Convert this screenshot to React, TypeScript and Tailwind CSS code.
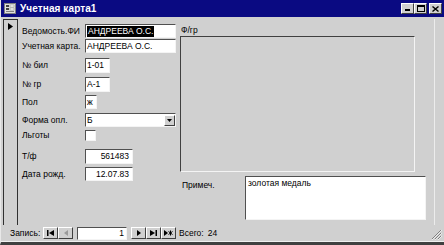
const raised = "border border-t-white border-l-white border-r-[#404040] border-b-[#404040]";
const sunken = "border border-t-[#505050] border-l-[#505050] border-r-[#f4f4f4] border-b-[#f4f4f4]";

function Field({
  label,
  mt,
  h,
  w,
  children,
}: {
  label: string;
  mt: string;
  h: string;
  w?: string;
  children: React.ReactNode;
}) {
  return (
    <div className={`flex items-center ${mt} ${h}`}>
      <div className="w-[63px] shrink-0 text-[8.5px] text-black">{label}</div>
      <div className={`${h} ${w ?? ""} flex`}>{children}</div>
    </div>
  );
}

function TextBox({ value, right, w }: { value: string; right?: boolean; w: string }) {
  return (
    <div
      className={`${w} h-full bg-white ${sunken} flex items-center px-[1px] text-[8.5px] text-black leading-none ${
        right ? "justify-end pr-[3px]" : ""
      }`}
    >
      {value}
    </div>
  );
}

function NavButton({ children }: { children: React.ReactNode }) {
  return (
    <div className={`w-[15px] h-[12px] ${raised} bg-[#d0d0d0] flex items-center justify-center`}>
      {children}
    </div>
  );
}

export default function App() {
  return (
    <div className="w-[444px] h-[245px] bg-[#d0d0d0] flex flex-col overflow-hidden font-['Liberation_Sans',Arial,sans-serif] border-l border-l-[#e8e8e8] border-b-[3px] border-b-[#404040]">
      {/* title bar */}
      <div className="h-[17px] shrink-0 bg-[#0a0a82] flex items-center pl-[3px] pr-[2px]">
        <svg width="12" height="11" viewBox="0 0 12 11">
          <rect x="0.5" y="0.5" width="11" height="10" fill="#e0e0e0" stroke="#808080" />
          <rect x="2" y="2" width="3" height="2" fill="#404040" />
          <rect x="6" y="2" width="4" height="2" fill="#ffffff" stroke="#808080" strokeWidth="0.5" />
          <rect x="2" y="5" width="3" height="2" fill="#404040" />
          <rect x="6" y="5" width="4" height="2" fill="#ffffff" stroke="#808080" strokeWidth="0.5" />
          <rect x="2" y="8" width="8" height="1" fill="#808080" />
        </svg>
        <span className="ml-[4px] text-[10px] font-bold text-white tracking-[0.1px]">Учетная карта1</span>
        <div className="ml-auto flex items-center">
          <div className={`w-[13px] h-[11px] ${raised} bg-[#d0d0d0] flex items-end justify-center pb-[2px]`}>
            <div className="w-[5px] h-[2px] bg-black" />
          </div>
          <div className={`w-[13px] h-[11px] ${raised} bg-[#d0d0d0] flex items-center justify-center`}>
            <div className="w-[8px] h-[7px] border border-black border-t-2" />
          </div>
          <div className={`ml-[2px] w-[13px] h-[11px] ${raised} bg-[#d0d0d0] flex items-center justify-center`}>
            <svg width="7" height="6" viewBox="0 0 7 6">
              <path d="M0.5 0.5L6.5 5.5M6.5 0.5L0.5 5.5" stroke="black" strokeWidth="1.4" />
            </svg>
          </div>
        </div>
      </div>

      {/* main area */}
      <div className="mt-[2px] h-[206px] flex">
        {/* record selector */}
        <div className="ml-[2px] w-[15px] h-full border-l border-r border-t border-[#303030] flex justify-center pt-[3px]">
          <svg width="5" height="7" viewBox="0 0 5 7">
            <path d="M0 0L5 3.5L0 7Z" fill="black" />
          </svg>
        </div>

        <div className="flex-1 flex border-r border-r-[#ececec] mr-[9px]">
          {/* left column */}
          <div className="w-[162px] shrink-0 pl-[4px] pt-[5px] flex flex-col">
            <Field label="Ведомость.ФИ" mt="mt-0" h="h-[14px]">
              <div className={`w-[91px] h-full bg-white ${sunken} flex items-center px-[1px]`}>
                <span className="bg-black text-white text-[8.5px] leading-[11px] px-[1px]">АНДРЕЕВА О.С.</span>
              </div>
            </Field>
            <Field label="Учетная карта." mt="mt-[1px]" h="h-[14px]">
              <TextBox value="АНДРЕЕВА О.С." w="w-[91px]" />
            </Field>
            <Field label="№ бил" mt="mt-[5px]" h="h-[15px]">
              <TextBox value="1-01" w="w-[25px]" />
            </Field>
            <Field label="№ гр" mt="mt-[4px]" h="h-[15px]">
              <TextBox value="А-1" w="w-[25px]" />
            </Field>
            <Field label="Пол" mt="mt-[3px]" h="h-[14px]">
              <TextBox value="ж" w="w-[12px]" />
            </Field>
            <Field label="Форма опл." mt="mt-[4px]" h="h-[14px]">
              <div className={`w-[91px] h-full bg-white ${sunken} flex items-center`}>
                <span className="flex-1 pl-[1px] text-[8.5px] leading-none">Б</span>
                <div className={`w-[11px] h-[11px] ${raised} bg-[#d0d0d0] flex items-center justify-center`}>
                  <svg width="5" height="3" viewBox="0 0 5 3">
                    <path d="M0 0H5L2.5 3Z" fill="black" />
                  </svg>
                </div>
              </div>
            </Field>
            <Field label="Льготы" mt="mt-[3px]" h="h-[11px]">
              <div className={`w-[11px] h-[11px] bg-white ${sunken}`} />
            </Field>
            <Field label="Т/ф" mt="mt-[8px]" h="h-[15px]">
              <TextBox value="561483" right w="w-[48px]" />
            </Field>
            <Field label="Дата рожд." mt="mt-[3px]" h="h-[14px]">
              <TextBox value="12.07.83" right w="w-[48px]" />
            </Field>
          </div>

          {/* right column */}
          <div className="flex flex-col pt-[5px]">
            <div className="h-[12px] pl-[1px] text-[8.5px] leading-[12px]">Ф/гр</div>
            <div className="w-[235px] h-[136px] border border-t-[#404040] border-l-[#404040] border-r-[#f4f4f4] border-b-[#f4f4f4]" />
            <div className="mt-[4px] flex">
              <div className="w-[65px] pl-[2px] pt-[3px] text-[8.5px]">Примеч.</div>
              <div className={`w-[181px] h-[44px] bg-white ${sunken} px-[2px] pt-[1px] text-[8.5px] leading-[11px]`}>
                золотая медаль
              </div>
            </div>
          </div>
        </div>
      </div>

      {/* navigation bar */}
      <div className="flex-1 flex items-center pl-[9px] text-[8.5px] border-b border-b-[#f0f0f0] relative">
        <span className="w-[33px]">Запись:</span>
        <NavButton>
          <svg width="7" height="6" viewBox="0 0 7 6">
            <rect x="0" y="0" width="1.5" height="6" fill="black" />
            <path d="M7 0L2 3L7 6Z" fill="black" />
          </svg>
        </NavButton>
        <NavButton>
          <svg width="4" height="6" viewBox="0 0 4 6">
            <path d="M4 0L0 3L4 6Z" fill="#9a9a9a" />
          </svg>
        </NavButton>
        <div className={`ml-[4px] w-[50px] h-[13px] bg-white ${sunken} flex items-center justify-end pr-[2px]`}>1</div>
        <div className="ml-[4px] flex">
          <NavButton>
            <svg width="4" height="6" viewBox="0 0 4 6">
              <path d="M0 0L4 3L0 6Z" fill="black" />
            </svg>
          </NavButton>
          <NavButton>
            <svg width="7" height="6" viewBox="0 0 7 6">
              <path d="M0 0L5 3L0 6Z" fill="black" />
              <rect x="5.5" y="0" width="1.5" height="6" fill="black" />
            </svg>
          </NavButton>
          <NavButton>
            <svg width="9" height="6" viewBox="0 0 9 6">
              <path d="M0 0L4 3L0 6Z" fill="black" />
              <path d="M6.5 0.5V5.5M4.5 1.5L8.5 4.5M8.5 1.5L4.5 4.5" stroke="black" strokeWidth="1" />
            </svg>
          </NavButton>
        </div>
        <span className="ml-[3px]">Всего:</span>
        <span className="ml-[4px]">24</span>
        <svg className="absolute right-[2px] bottom-[1px]" width="11" height="11" viewBox="0 0 11 11">
          <path d="M10 1L1 10M10 4L4 10M10 7L7 10" stroke="#808080" strokeWidth="1" />
          <path d="M11 1L1 11M11 4L4 11M11 7L7 11" stroke="#ffffff" strokeWidth="0.6" />
        </svg>
      </div>
    </div>
  );
}
